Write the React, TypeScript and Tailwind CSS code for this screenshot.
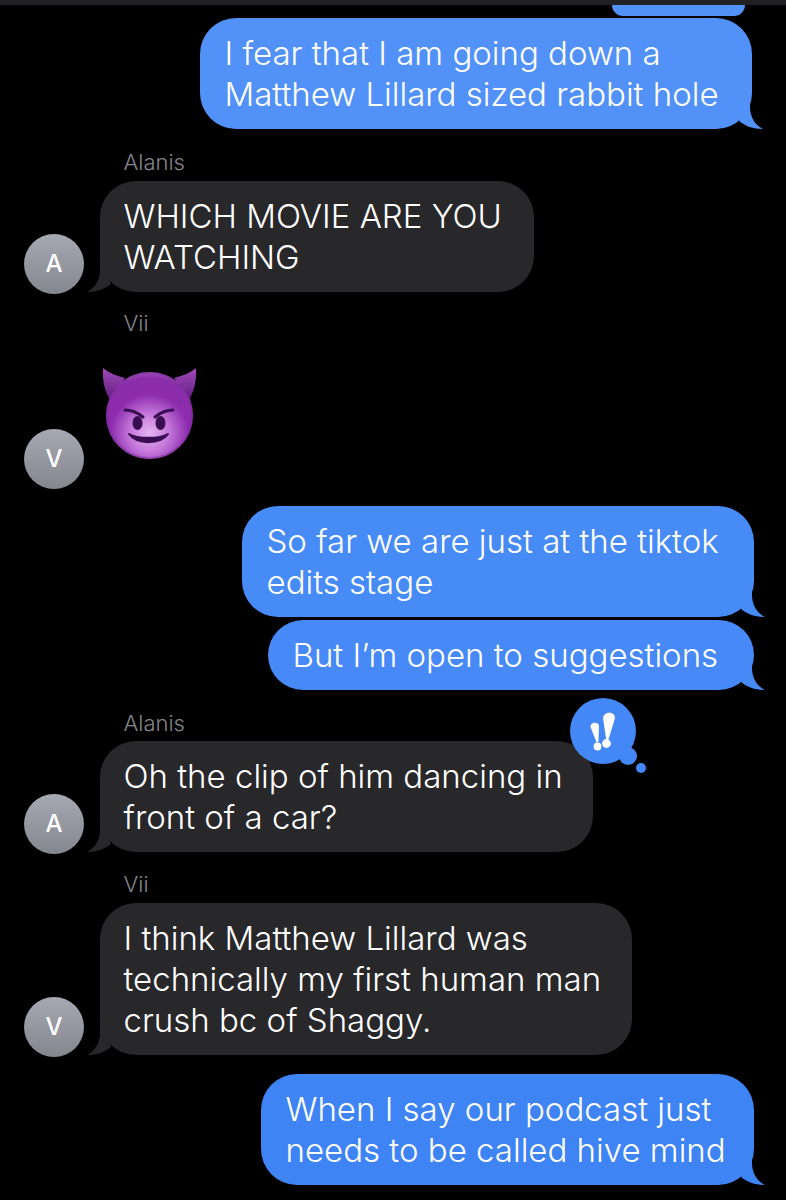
import React from 'react';

const font = "font-['Inter','Liberation_Sans',sans-serif]";

function Tail({ side, color }: { side: 'left' | 'right'; color: string }) {
  // iMessage tail, drawn once and mirrored for outgoing bubbles
  return (
    <svg
      width="30"
      height="40"
      viewBox="0 0 30 40"
      className={side === 'left' ? 'absolute bottom-0 left-[-14px]' : 'absolute bottom-0 right-[-12px] -scale-x-100'}
    >
      <path d="M14 4 L14 18 C14 28 9 36 1 40 C11 40 19 37 25 32 Z" fill={color} />
    </svg>
  );
}

function Outgoing({ lines, width, color, rightGap = 'mr-[32px]', extra = '' }: { lines: string[]; width: string; color: string; rightGap?: string; extra?: string }) {
  return (
    <div className={`flex justify-end ${rightGap} ${extra}`}>
      <div
        className={`relative ${width} rounded-[36px] pl-[24.5px] py-[14.5px] text-[33px] font-[350] leading-[41px] text-white whitespace-nowrap`}
        style={{ backgroundColor: color }}
      >
        {lines.map((l) => (
          <div key={l}>{l}</div>
        ))}
        <Tail side="right" color={color} />
      </div>
    </div>
  );
}

function Avatar({ letter }: { letter: string }) {
  return (
    <div className="w-[60px] h-[60px] rounded-full shrink-0 bg-gradient-to-b from-[#a6a9b1] to-[#85878f] flex items-center justify-center text-white text-[24px] font-medium">
      {letter}
    </div>
  );
}

function Incoming({ letter, lines, width, extra = '', children }: { letter: string; lines: string[]; width: string; extra?: string; children?: React.ReactNode }) {
  return (
    <div className={`flex items-end gap-[16px] pl-[24px] ${extra}`}>
      <div className="mb-[-2px]">
        <Avatar letter={letter} />
      </div>
      <div className={`relative ${width} rounded-[36px] bg-[#28282b] pl-[23.5px] py-[14.5px] text-[33px] font-[350] leading-[41px] text-white whitespace-nowrap`}>
        {lines.map((l) => (
          <div key={l}>{l}</div>
        ))}
        <Tail side="left" color="#28282b" />
        {children}
      </div>
    </div>
  );
}

function Name({ children, extra }: { children: string; extra: string }) {
  return <div className={`pl-[123.5px] h-[24px] text-[22px] font-[350] leading-[24px] text-[#85858b] ${extra}`}>{children}</div>;
}

function DevilEmoji() {
  return (
    <svg width="96" height="94" viewBox="0 0 96 94">
      <defs>
        <radialGradient id="face" cx="0.5" cy="0.7" r="0.72">
          <stop offset="0" stopColor="#e6b4f0" />
          <stop offset="0.3" stopColor="#c67adb" />
          <stop offset="0.62" stopColor="#8d2cae" />
          <stop offset="0.88" stopColor="#8a2ea8" />
          <stop offset="1" stopColor="#a860c2" />
        </radialGradient>
        <linearGradient id="horn" x1="0" y1="0" x2="0" y2="1">
          <stop offset="0" stopColor="#a04ab8" />
          <stop offset="1" stopColor="#5f1c7e" />
        </linearGradient>
      </defs>
      <path d="M1 1 C7 6 15 9 23 11 L9 34 C3 26 0 13 1 1 Z" fill="url(#horn)" />
      <path d="M94 1 C88 6 80 9 72 11 L86 34 C92 26 95 13 94 1 Z" fill="url(#horn)" />
      <circle cx="47.5" cy="48.5" r="43.5" fill="url(#face)" />
      <circle cx="47.5" cy="48.5" r="42.5" fill="none" stroke="#7d2a9c" strokeOpacity="0.45" strokeWidth="2" />
      <path d="M23 43 C30 43 36 46 41 50" stroke="#3a0e52" strokeWidth="3" fill="none" strokeLinecap="round" />
      <path d="M71 43 C64 43 58 46 53 50" stroke="#3a0e52" strokeWidth="3" fill="none" strokeLinecap="round" />
      <ellipse cx="35.5" cy="56" rx="5" ry="7" fill="#3a0e52" />
      <ellipse cx="58.5" cy="56" rx="5" ry="7" fill="#3a0e52" />
      <path d="M27 67 C35 78 58 78 66 67 C58 72 35 72 27 67 Z" fill="#3a0e52" stroke="#3a0e52" strokeWidth="2" strokeLinejoin="round" />
    </svg>
  );
}

function Reaction() {
  return (
    <svg width="84" height="78" viewBox="0 0 84 78" className="absolute left-[469px] top-[-43px]">
      <circle cx="34" cy="33" r="33" fill="#4487f6" />
      <circle cx="59" cy="58" r="9" fill="#4487f6" />
      <circle cx="72" cy="70" r="5" fill="#4487f6" />
      <path d="M21.5 29 C21 24 29.5 23 30 28 L29.5 43 C29 45 27.5 45 27 43 Z" fill="#fff" />
      <circle cx="28.5" cy="48.5" r="3.9" fill="#fff" />
      <path d="M34 20 C35 13 46 13 46 20 L40 40 C39 42 37 42 37 40 Z" fill="#fff" />
      <circle cx="37.5" cy="45.5" r="4.4" fill="#fff" />
    </svg>
  );
}

export default function App() {
  return (
    <div className={`w-[786px] h-[1200px] overflow-hidden bg-black ${font}`}>
      <div className="h-[5px] bg-[#212124]" />
      <div className="ml-[612px] w-[133px] h-[11px] rounded-b-[24px] bg-[#5292f8]" />

      <Outgoing lines={['I fear that I am going down a', 'Matthew Lillard sized rabbit hole']} width="w-[552px]" color="#5292f8" rightGap="mr-[34px]" extra="mt-[2px]" />

      <Name extra="mt-[21px]">Alanis</Name>
      <Incoming letter="A" lines={['WHICH MOVIE ARE YOU', 'WATCHING']} width="w-[434px]" extra="mt-[7px]" />

      <Name extra="mt-[19px]">Vii</Name>
      <div className="mt-[32px] flex gap-[18px] pl-[24px] h-[122px] items-end">
        <Avatar letter="V" />
        <div className="self-start">
          <DevilEmoji />
        </div>
      </div>

      <Outgoing lines={['So far we are just at the tiktok', 'edits stage']} width="w-[512px]" color="#478bf7" extra="mt-[17px]" />
      <Outgoing lines={['But I’m open to suggestions']} width="w-[486px]" color="#4689f7" extra="mt-[3px]" />

      <Name extra="mt-[21px]">Alanis</Name>
      <Incoming letter="A" lines={['Oh the clip of him dancing in', 'front of a car?']} width="w-[493px]" extra="mt-[6px]">
        <Reaction />
      </Incoming>

      <Name extra="mt-[20px]">Vii</Name>
      <Incoming letter="V" lines={['I think Matthew Lillard was', 'technically my first human man', 'crush bc of Shaggy.']} width="w-[532px]" extra="mt-[7px]" />

      <Outgoing lines={['When I say our podcast just', 'needs to be called hive mind']} width="w-[493px]" color="#3f84f5" extra="mt-[19px]" />
    </div>
  );
}
